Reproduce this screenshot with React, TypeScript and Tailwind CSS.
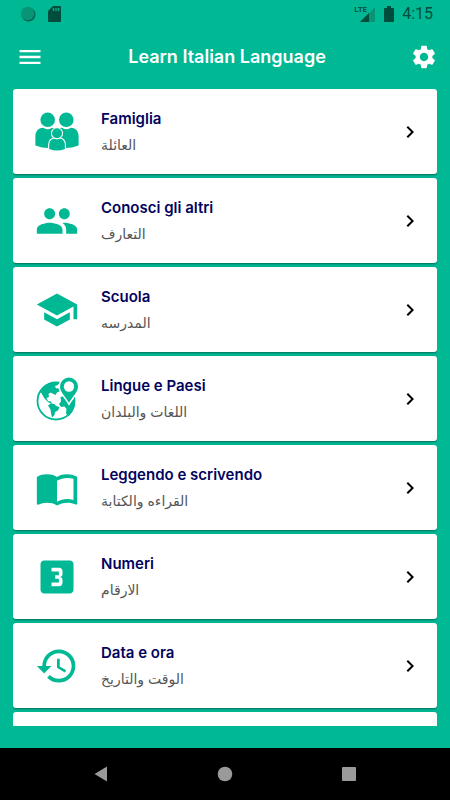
import type { ReactNode } from "react";
import {
  MdChevronRight,
  MdHistory,
  MdLooks3,
  MdMenu,
  MdPeople,
  MdSchool,
  MdSettings,
} from "react-icons/md";

interface Lesson {
  title: string;
  subtitle: string;
  icon: ReactNode;
}

function FamilyIcon() {
  return (
    <svg width="44" height="44" viewBox="0 0 44 44" fill="currentColor">
      <circle cx="12.7" cy="9.8" r="7.3" />
      <circle cx="31.3" cy="9.8" r="7.3" />
      <path d="M.4 35.500V26c0-5 3.300-8.300 8-8.300q4.300 3 8.600 0 3.300 0 5 1.500 1.700-1.500 5-1.500 4.300 3 8.600 0c4.700 0 8 3.300 8 8.300v9.500Q37 38 30.500 38h-17Q7 38 .400 35.500z" />
      {/* child, outlined so it reads in front of the parents */}
      <g stroke="#fff" strokeWidth="2.200" paintOrder="stroke">
        <path d="M14.200 39v-3.500c0-4.500 2.300-7 5.800-7h4c3.500 0 5.900 2.500 5.900 7V39q-7.800 3-15.700 0z" />
        <circle cx="22" cy="23.300" r="5" />
      </g>
    </svg>
  );
}

function GlobeIcon() {
  return (
    <svg width="44" height="44" viewBox="0 0 44 44">
      <circle cx="21" cy="24" r="18.500" fill="none" stroke="currentColor" strokeWidth="1.800" />
      <path
        d="M4 16c3-6 8-9.700 15-11l5 0-1 3-3 1 1 2.500 2-.500 2 3-3 1.500-1.500 2.500-3-1.500-2-1-2 1.500.500 3-2.500 1 1.500 3 3 .500 1 3-4.500-3-3-3-3.500-6z"
        fill="currentColor"
      />
      <path d="M13 28.500l3-2 3.500.500 1.500 2 3.500 1-1.500 3.500-3 1.500-.500 3-2.500 2.500-1-4.500-.500-3.500z" fill="currentColor" />
      <path d="M25.500 20l3.500-1 5 7 5.500-4.500c1.500 7.500-1 13.500-6.500 18l-2-3.500.500-4-2-2.500-3.500.500-2-3 2-2.500z" fill="currentColor" />
      <path
        d="M34 .500a9 9 0 0 1 9 9c0 5.300-4.600 9-9 16.300-4.400-7.300-9-11-9-16.300a9 9 0 0 1 9-9z"
        fill="currentColor"
        stroke="#fff"
        strokeWidth="3"
        paintOrder="stroke"
      />
      <circle cx="34" cy="9.500" r="5.200" fill="#fff" />
    </svg>
  );
}

function BookIcon() {
  return (
    <svg width="44" height="44" viewBox="0 0 24 24" fill="currentColor">
      <path
        fillRule="evenodd"
        d="M21 5c-1.110-.350-2.330-.500-3.500-.500-1.950 0-4.050.400-5.500 1.500-1.450-1.100-3.550-1.500-5.500-1.500S2.450 4.900 1 6v14.650c0 .250.250.500.500.500.100 0 .150-.050.250-.050C3.100 20.450 5.050 20 6.500 20c1.950 0 4.050.400 5.500 1.500 1.350-.850 3.800-1.500 5.500-1.500 1.650 0 3.350.300 4.750 1.050.100.050.150.050.250.050.250 0 .500-.250.500-.500V6c-.600-.450-1.250-.750-2-1zm0 13.500c-1.100-.350-2.300-.500-3.500-.500-1.700 0-4.150.650-5.500 1.500V8c1.350-.850 3.800-1.500 5.500-1.500 1.200 0 2.400.150 3.500.500v11.500z"
      />
    </svg>
  );
}

const lessons: Lesson[] = [
  { title: "Famiglia", subtitle: "العائلة", icon: <FamilyIcon /> },
  { title: "Conosci gli altri", subtitle: "التعارف", icon: <MdPeople size={44} /> },
  { title: "Scuola", subtitle: "المدرسه", icon: <MdSchool size={44} /> },
  { title: "Lingue e Paesi", subtitle: "اللغات والبلدان", icon: <GlobeIcon /> },
  { title: "Leggendo e scrivendo", subtitle: "القراءه والكتابة", icon: <BookIcon /> },
  { title: "Numeri", subtitle: "الارقام", icon: <MdLooks3 size={44} /> },
  { title: "Data e ora", subtitle: "الوقت والتاريخ", icon: <MdHistory size={44} /> },
  { title: "", subtitle: "", icon: null },
];

function StatusBar() {
  return (
    <div className="flex h-7 shrink-0 items-center pr-[17px] pl-5 text-[#004d3e]">
      <svg width="16" height="16" viewBox="0 0 16 16">
        <circle cx="8.5" cy="8.5" r="7" fill="#00604c" />
        <circle cx="7.7" cy="7.5" r="6.8" fill="#079477" />
      </svg>
      <svg className="ml-3" width="14" height="16" viewBox="0 0 14 16">
        <path d="M5 0h7a1 1 0 0 1 1 1v14a1 1 0 0 1-1 1H1a1 1 0 0 1-1-1V5z" fill="currentColor" />
        <path d="M5.5 2v3M8 2v3M10.500 2v3" stroke="#00b894" strokeWidth="1.3" />
      </svg>
      <span className="relative ml-auto">
        <svg width="15" height="15" viewBox="0 0 15 15">
          <path d="M15 0v15H0z" fill="#079477" />
          <path d="M9 6v9H0z" fill="currentColor" />
        </svg>
        <span className="absolute right-2 bottom-2 font-[Roboto] text-[8px] leading-[8px] font-semibold">LTE</span>
      </span>
      <svg className="ml-[9px]" width="10" height="16" viewBox="0 0 10 16">
        <path d="M3 0h4v2h2a1 1 0 0 1 1 1v12a1 1 0 0 1-1 1H1a1 1 0 0 1-1-1V3a1 1 0 0 1 1-1h2z" fill="currentColor" />
      </svg>
      <span className="ml-2 font-[Roboto] text-base">4:15</span>
    </div>
  );
}

function LessonCard({ title, subtitle, icon }: Lesson) {
  return (
    <li>
      <button className="flex h-[85px] w-full items-center rounded-[3px] bg-white pr-[15px] pl-[22px] text-left shadow-[0_1px_2px_rgba(0,0,0,0.4)]">
        <span className="w-11 text-[#00b894]">{icon}</span>
        <span className="ml-[22px] flex flex-1 flex-col">
          <span className="text-[15px] leading-[26px] font-semibold text-[#03035e]">{title}</span>
          <span lang="ar" className="text-sm leading-[26px] text-[#555555]">
            {subtitle}
          </span>
        </span>
        <MdChevronRight size={24} className="text-black" />
      </button>
    </li>
  );
}

export default function App() {
  return (
    <div className="flex h-screen flex-col bg-[#00b894] font-[Inter,'DejaVu_Sans',sans-serif]">
      <StatusBar />
      <header className="flex h-[61px] shrink-0 items-center justify-between pr-3 pb-1 pl-4 text-white">
        <button aria-label="Menu">
          <MdMenu size={28} />
        </button>
        <h1 className="text-lg font-semibold">Learn Italian Language</h1>
        <button aria-label="Settings">
          <MdSettings size={28} />
        </button>
      </header>
      <main className="mx-[13px] mb-[22px] min-h-0 flex-1 overflow-hidden">
        <ul className="flex flex-col gap-1">
          {lessons.map((lesson, i) => (
            <LessonCard key={i} {...lesson} />
          ))}
        </ul>
      </main>
      <nav className="grid h-[52px] shrink-0 grid-cols-3 items-center justify-items-center bg-black px-[39px] text-[#9a9a9a]">
        <button aria-label="Back">
          <svg width="14" height="16" viewBox="0 0 14 16" fill="currentColor">
            <path d="M13 .5v15L.5 8z" />
          </svg>
        </button>
        <button aria-label="Home">
          <svg width="16" height="16" viewBox="0 0 16 16" fill="currentColor">
            <circle cx="8" cy="8" r="7.3" />
          </svg>
        </button>
        <button aria-label="Recent apps">
          <svg width="14" height="14" viewBox="0 0 14 14" fill="currentColor">
            <rect width="14" height="14" rx="1" />
          </svg>
        </button>
      </nav>
    </div>
  );
}
